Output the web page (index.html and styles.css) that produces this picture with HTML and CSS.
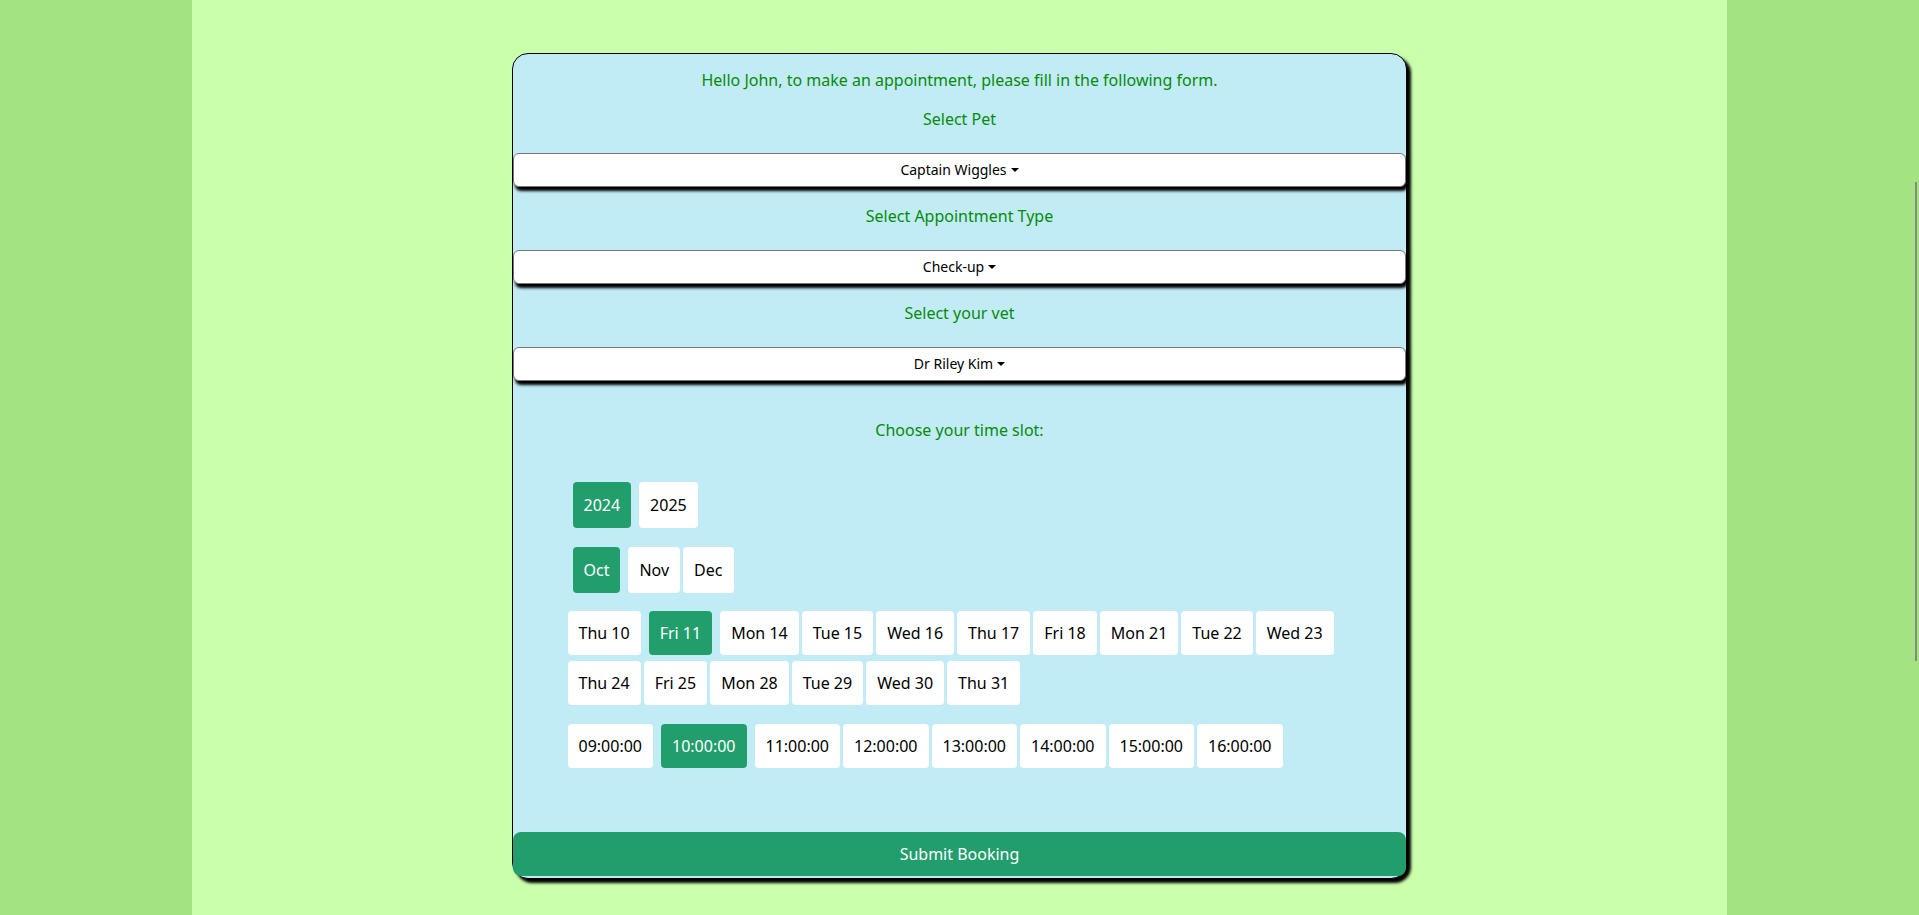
FILE: index.html
```html
<!DOCTYPE html>
<html lang="en">
<head>
<meta charset="utf-8">
<title>Book an appointment</title>
<link rel="stylesheet" href="styles.css">
</head>
<body>
<div class="page">
  <main class="column">
    <form class="card">
      <p class="intro">Hello John, to make an appointment, please fill in the following form.</p>

      <p class="label">Select Pet</p>
      <button type="button" class="dropdown">Captain Wiggles</button>

      <p class="label">Select Appointment Type</p>
      <button type="button" class="dropdown">Check-up</button>

      <p class="label">Select your vet</p>
      <button type="button" class="dropdown">Dr Riley Kim</button>

      <p class="slot-title">Choose your time slot:</p>

      <div class="picker">
        <div class="row row-tall">
          <button type="button" class="chip active">2024</button>
          <button type="button" class="chip">2025</button>
        </div>
        <div class="row row-tall">
          <button type="button" class="chip active">Oct</button>
          <button type="button" class="chip">Nov</button>
          <button type="button" class="chip">Dec</button>
        </div>
        <div class="row days">
          <button type="button" class="chip">Thu 10</button>
          <button type="button" class="chip active">Fri 11</button>
          <button type="button" class="chip">Mon 14</button>
          <button type="button" class="chip">Tue 15</button>
          <button type="button" class="chip">Wed 16</button>
          <button type="button" class="chip">Thu 17</button>
          <button type="button" class="chip">Fri 18</button>
          <button type="button" class="chip">Mon 21</button>
          <button type="button" class="chip">Tue 22</button>
          <button type="button" class="chip">Wed 23</button>
          <button type="button" class="chip">Thu 24</button>
          <button type="button" class="chip">Fri 25</button>
          <button type="button" class="chip">Mon 28</button>
          <button type="button" class="chip">Tue 29</button>
          <button type="button" class="chip">Wed 30</button>
          <button type="button" class="chip">Thu 31</button>
        </div>
        <div class="row">
          <button type="button" class="chip">09:00:00</button>
          <button type="button" class="chip active">10:00:00</button>
          <button type="button" class="chip">11:00:00</button>
          <button type="button" class="chip">12:00:00</button>
          <button type="button" class="chip">13:00:00</button>
          <button type="button" class="chip">14:00:00</button>
          <button type="button" class="chip">15:00:00</button>
          <button type="button" class="chip">16:00:00</button>
        </div>
      </div>

      <button type="submit" class="submit">Submit Booking</button>
    </form>
  </main>
</div>
<div class="scroll-thumb"></div>
</body>
</html>
```

FILE: styles.css
```css
* {
  box-sizing: border-box;
}

html, body {
  margin: 0;
  height: 100%;
}

body {
  background: #a3e381;
  font-family: "Noto Sans", "Open Sans", sans-serif;
  font-size: 16px;
  line-height: 24px;
  overflow: hidden;
}

.page {
  height: 100%;
}

.column {
  width: 80%;
  height: 100%;
  margin: 0 auto;
  background: #caffac;
  padding-top: 53px;
}

.card {
  width: 895px;
  margin: 0 auto;
  background: #c1ecf5;
  border: 1px solid #000;
  border-radius: 16px;
  box-shadow: 4px 4px 3px #000;
  padding: 14px 0 2px;
  display: flex;
  flex-direction: column;
}

.intro,
.label,
.slot-title {
  margin: 0;
  color: #088a0c;
  text-align: center;
}

.intro {
  margin-bottom: 15px;
}

.label {
  margin-bottom: 22px;
}

.dropdown {
  display: block;
  width: 100%;
  height: 34px;
  margin: 0 0 17px;
  background: #fff;
  border: 1px solid #777;
  border-radius: 6px;
  box-shadow: 2px 4px 3px #000;
  font-family: inherit;
  font-size: 14px;
  line-height: 20px;
  color: #000;
  text-align: center;
  padding: 0;
}

.dropdown::after {
  content: "";
  display: inline-block;
  margin-left: 4px;
  vertical-align: 3px;
  border-top: 4.5px solid #000;
  border-left: 4px solid transparent;
  border-right: 4px solid transparent;
}

.slot-title {
  margin-top: 20px;
  margin-bottom: 40px;
}

.picker {
  padding: 0 0 0 53px;
  display: flex;
  flex-direction: column;
  gap: 18.5px;
}

.row {
  display: flex;
  flex-wrap: wrap;
  row-gap: 6px;
}

.row-tall .chip {
  height: 46px;
}

.chip {
  height: 44px;
  margin: 0 1.5px;
  padding: 0 11px;
  background: #fff;
  color: #000;
  border: none;
  border-radius: 4px;
  font-family: inherit;
  font-size: 16px;
  line-height: 24px;
}

.chip.active {
  background: #229e6d;
  color: #fff;
  margin: 0 6.5px;
}

.submit {
  margin-top: 64px;
  height: 44px;
  width: 100%;
  background: #229e6d;
  color: #fff;
  border: none;
  border-radius: 8px;
  font-family: inherit;
  font-size: 16px;
}

.scroll-thumb {
  position: fixed;
  top: 182px;
  right: 2px;
  width: 2px;
  height: 479px;
  background: #888;
}
```
